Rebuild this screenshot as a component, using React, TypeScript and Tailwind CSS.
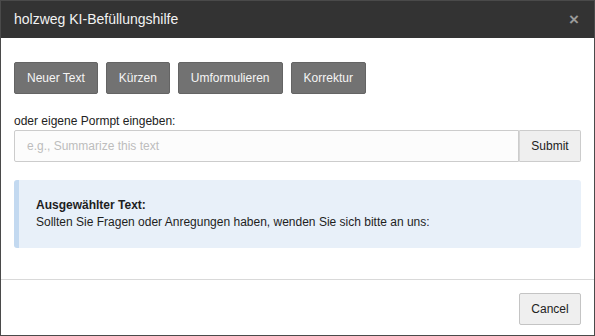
const actions = ['Neuer Text', 'Kürzen', 'Umformulieren', 'Korrektur'];

const App = () => {
  return (
    <div className="flex h-[336px] w-[595px] flex-col border border-[#4a4a4a] bg-white font-['Liberation_Sans',Arial,sans-serif] text-[#222]">
      {/* header */}
      <header className="flex h-[37px] shrink-0 items-center justify-between bg-[#333333] px-[13px]">
        <h1 className="text-[14px] text-[#f2f2f2]">holzweg KI-Befüllungshilfe</h1>
        <span className="mr-[2px] text-[17px] font-bold leading-none text-[#9a9a9a]">×</span>
      </header>

      {/* body */}
      <div className="flex flex-1 flex-col border-b border-[#d9d9d9] px-[13px] pt-[24px]">
        <div className="flex gap-[8px]">
          {actions.map((a) => (
            <button
              key={a}
              className="h-[32px] rounded-[2px] border border-[#646464] bg-[#727272] px-[12px] text-[12px] text-[#f5f5f5]"
            >
              {a}
            </button>
          ))}
        </div>

        <label className="mt-[19px] mb-[1px] text-[12px] leading-[16px] text-[#222]">
          oder eigene Pormpt eingeben:
        </label>
        <div className="flex h-[32px]">
          <input
            placeholder="e.g., Summarize this text"
            className="flex-1 rounded-l-[2px] border border-[#cccccc] bg-[#fcfcfc] px-[12px] text-[12px] outline-none placeholder:text-[#bdbdbd]"
          />
          <button className="w-[62px] rounded-r-[2px] border border-l-[#d6d6d6] border-[#cccccc] bg-[#efefef] text-[12px] text-[#222]">
            Submit
          </button>
        </div>

        <div className="mt-[18px] rounded-[3px] border-l-[5px] border-[#c3d9f0] bg-[#e8f0f9] pt-[17px] pb-[17px] pl-[17px] text-[12px] leading-[17px] text-[#1e1e1e]">
          <p className="font-bold">Ausgewählter Text:</p>
          <p>Sollten Sie Fragen oder Anregungen haben, wenden Sie sich bitte an uns:</p>
        </div>
      </div>

      {/* footer */}
      <footer className="flex h-[55px] shrink-0 justify-end px-[13px] pt-[13px]">
        <button className="h-[32px] w-[62px] rounded-[2px] border border-[#c4c4c4] bg-[#efefef] text-[12px] text-[#222]">
          Cancel
        </button>
      </footer>
    </div>
  );
};

export default App;
